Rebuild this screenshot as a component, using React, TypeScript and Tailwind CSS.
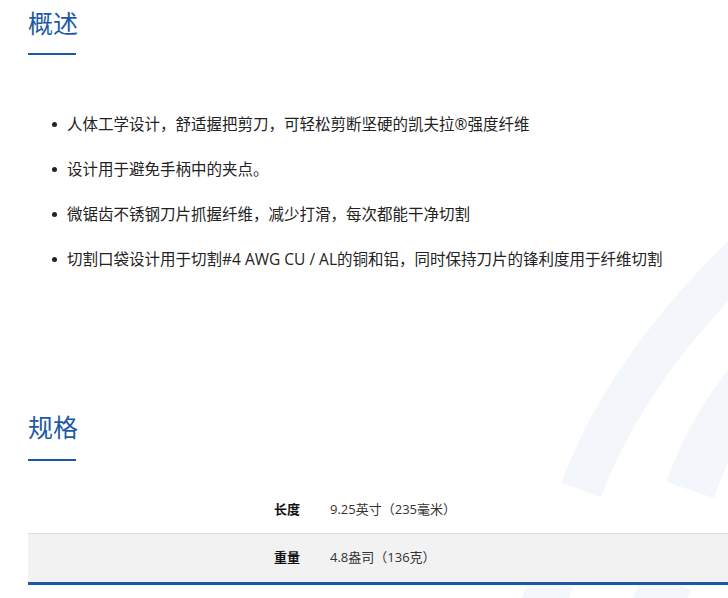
export default function App() {
  const items = [
    "人体工学设计，舒适握把剪刀，可轻松剪断坚硬的凯夫拉®强度纤维",
    "设计用于避免手柄中的夹点。",
    "微锯齿不锈钢刀片抓握纤维，减少打滑，每次都能干净切割",
    "切割口袋设计用于切割#4 AWG CU / AL的铜和铝，同时保持刀片的锋利度用于纤维切割",
  ];
  return (
    <div className="relative w-[728px] h-[598px] overflow-hidden bg-white" style={{ fontFamily: '"Open Sans", "Noto Sans CJK SC", sans-serif' }}>
      <svg className="absolute left-0 top-0" width="728" height="598" viewBox="0 0 728 598">
        <path d="M581 490 Q630 360 760 240" stroke="#f3f6fb" strokeWidth="42" fill="none" />
        <path d="M690 490 Q710 430 760 370" stroke="#f3f6fb" strokeWidth="50" fill="none" />
        <path d="M541 610 L552 580" stroke="#f3f6fb" strokeWidth="44" fill="none" />
        <path d="M655 610 L668 580" stroke="#f3f6fb" strokeWidth="50" fill="none" />
      </svg>
      <div className="relative pl-[28px]">
        <h2 className="pt-[6px] text-[25px] leading-[34px] text-[#1d5aa5] font-normal">概述</h2>
        <div className="mt-[13px] w-[48px] h-[2px] bg-[#1d5aa5]" />
        <ul className="mt-[58px] flex flex-col gap-[23px] text-[15.5px] leading-[22px] text-[#222]">
          {items.map((t) => (
            <li key={t} className="flex items-center whitespace-nowrap">
              <span className="ml-[24px] mr-[10px] w-[5px] h-[5px] rounded-full bg-[#222]" />
              {t}
            </li>
          ))}
        </ul>
        <h2 className="mt-[140px] text-[25px] leading-[34px] text-[#1d5aa5] font-normal">规格</h2>
        <div className="mt-[15px] w-[48px] h-[2px] bg-[#1d5aa5]" />
        <div className="mt-[25px] text-[13px] text-[#333] border-b-[3px] border-[#1d5aa5]">
          <div className="flex h-[48px] items-center border-b border-[#dddddd]">
            <div className="w-[302px] text-right font-bold text-[#111] pr-[30px]">长度</div>
            <div>9.25英寸（235毫米）</div>
          </div>
          <div className="flex h-[48px] items-center bg-[#f2f2f2]">
            <div className="w-[302px] text-right font-bold text-[#111] pr-[30px]">重量</div>
            <div>4.8盎司（136克）</div>
          </div>
        </div>
      </div>
    </div>
  );
}
